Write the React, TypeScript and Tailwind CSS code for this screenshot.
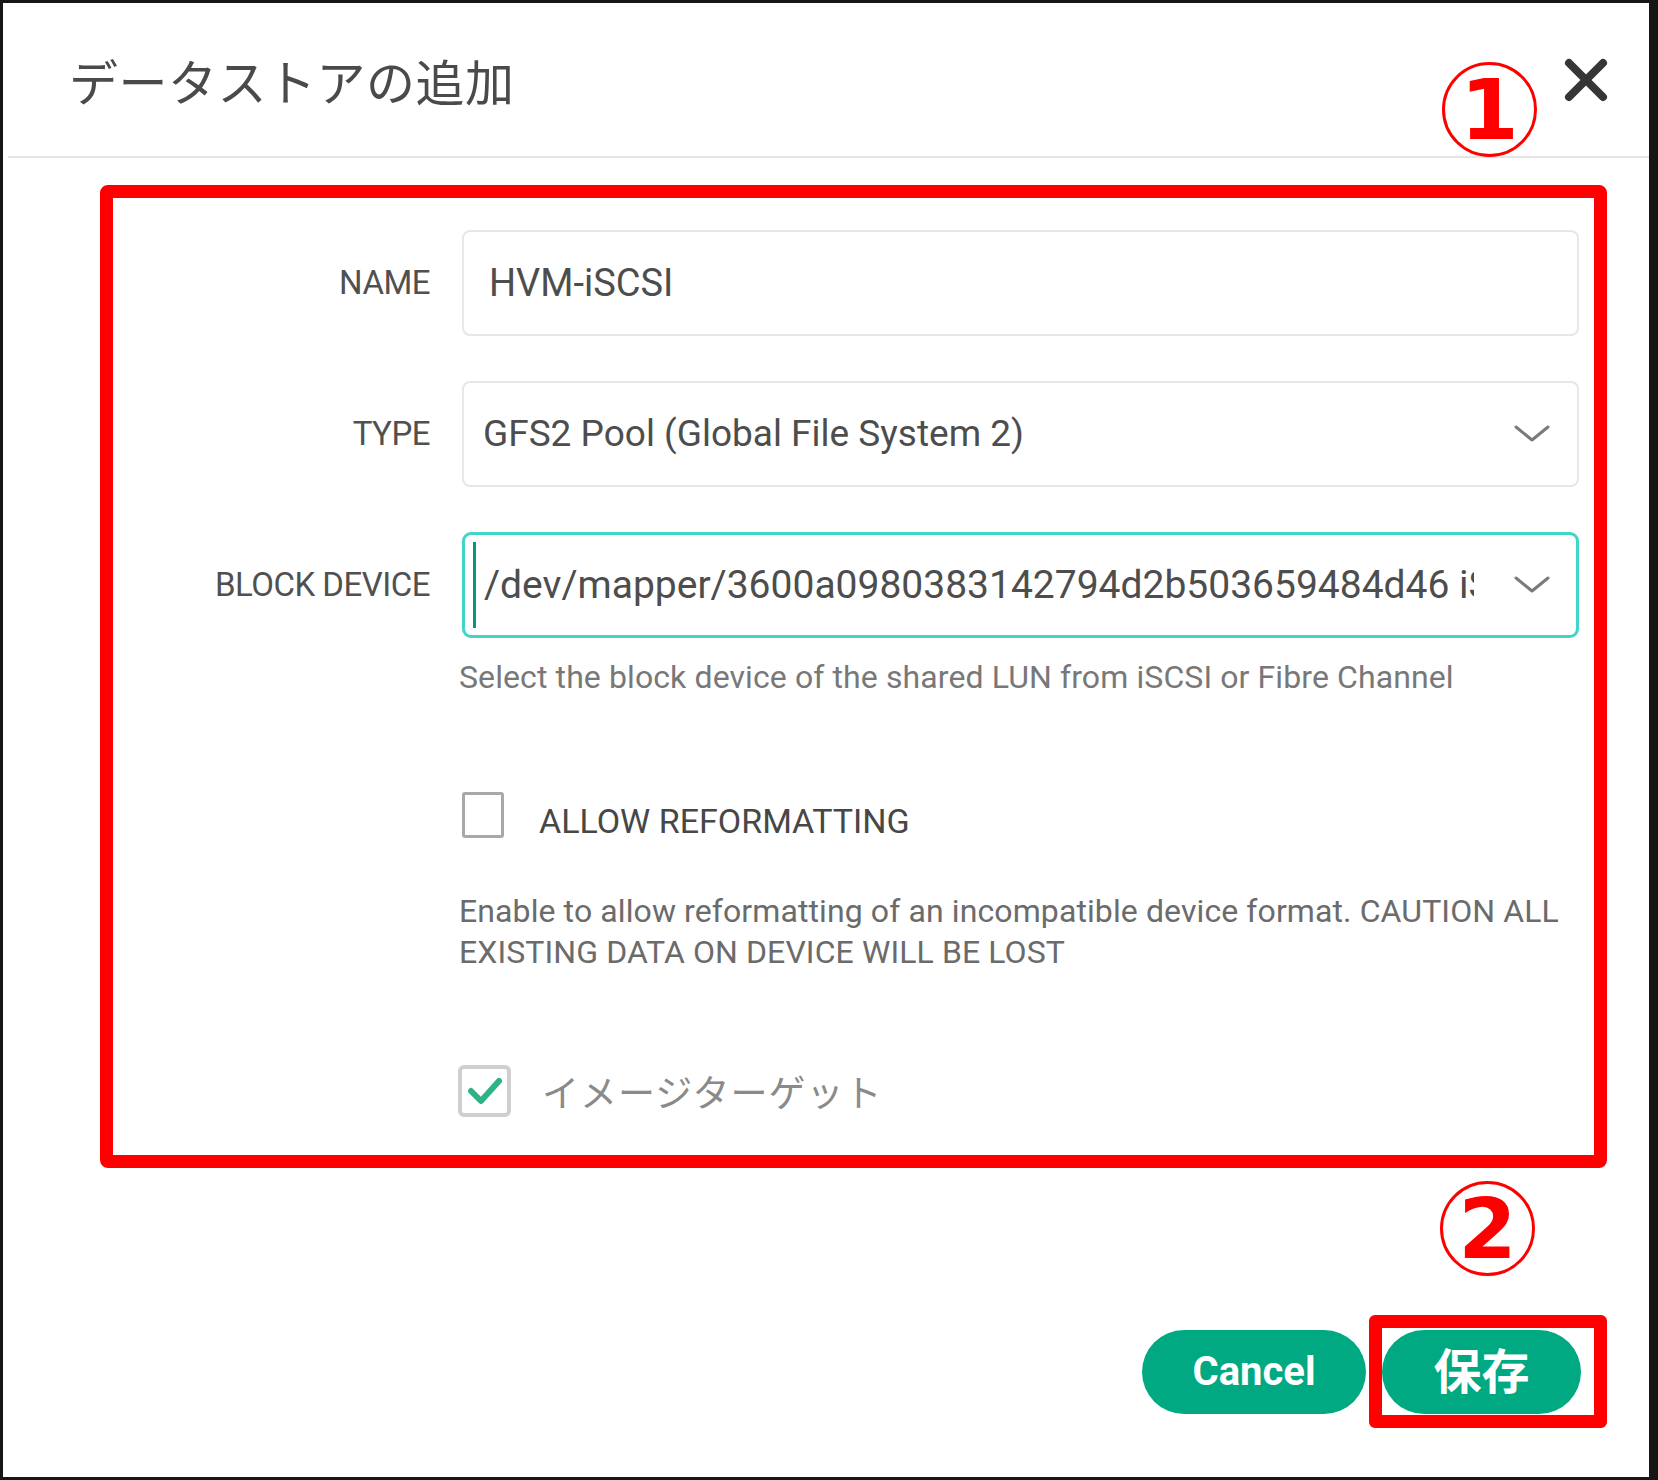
import React from "react";

const latin = "font-['Roboto','Noto_Sans_CJK_JP',sans-serif]";

function Chevron() {
  return (
    <svg width="36" height="18" viewBox="0 0 36 18" className="shrink-0">
      <polyline points="2,2 18,15 34,2" fill="none" stroke="#7a7a7a" strokeWidth="3" strokeLinecap="round" strokeLinejoin="round" />
    </svg>
  );
}

function Marker({ n }: { n: string }) {
  return (
    <div className="w-[95px] h-[95px] rounded-full border-[3px] border-[#ff0000] flex items-center justify-center">
      <span className="font-['DejaVu_Sans',sans-serif] font-bold text-[84px] leading-none text-[#ff0000]">{n}</span>
    </div>
  );
}

function Row({ label, children }: { label: string; children: React.ReactNode }) {
  return (
    <div className="flex items-center">
      <div className="w-[317px] text-right text-[33px] text-[#505050] tracking-[-0.5px]">{label}</div>
      <div className="ml-[32px] w-[1117px]">{children}</div>
    </div>
  );
}

export default function App() {
  return (
    <div className={`relative w-[1658px] h-[1480px] bg-white border-[3px] border-r-[9px] border-[#161616] flex flex-col ${latin}`}>
      {/* header */}
      <div className="h-[155px] shrink-0 flex items-center justify-between pl-[66px] pr-[41px] border-b-2 border-[#e4e4e4] ml-[5px]">
        <h1 className="font-['Noto_Sans_CJK_JP',sans-serif] text-[49px] font-normal text-[#4a4a4a] tracking-[0.5px] -ml-[5px]">データストアの追加</h1>
        <svg width="44" height="44" viewBox="0 0 44 44">
          <line x1="5" y1="5" x2="39" y2="39" stroke="#363636" strokeWidth="8" strokeLinecap="round" />
          <line x1="39" y1="5" x2="5" y2="39" stroke="#363636" strokeWidth="8" strokeLinecap="round" />
        </svg>
      </div>

      {/* form, outlined by annotation box 1 */}
      <div className="ml-[97px] mt-[27px] w-[1507px] h-[983px] border-[13px] border-[#ff0000] rounded-[8px] pt-[32px] flex flex-col">
        <Row label="NAME">
          <div className="h-[106px] border-2 border-[#e6e7ea] rounded-[8px] flex items-center pl-[25px] text-[38px] text-[#4d4d4d]">
            HVM-iSCSI
          </div>
        </Row>
        <div className="mt-[45px]">
          <Row label="TYPE">
            <div className="h-[106px] border-2 border-[#e6e7ea] rounded-[8px] flex items-center pl-[19px] pr-[27px] text-[37px] text-[#4d4d4d]">
              <span className="flex-1">GFS2 Pool (Global File System 2)</span>
              <Chevron />
            </div>
          </Row>
        </div>
        <div className="mt-[45px]">
          <Row label="BLOCK DEVICE">
            <div className="h-[106px] border-[3px] border-[#3fd6c9] rounded-[9px] flex items-center pl-[8px] pr-[26px] text-[39px] text-[#4d4d4d]">
              <span className="w-[3px] h-[86px] bg-[#0b9479] shrink-0" />
              <span className="ml-[8px] w-[990px] overflow-hidden whitespace-nowrap">/dev/mapper/3600a0980383142794d2b503659484d46 iSCSI</span>
              <span className="flex-1" />
              <Chevron />
            </div>
          </Row>
        </div>

        <p className="mt-[21px] pl-[346px] text-[32px] leading-[36px] text-[#787878] tracking-[0.1px] whitespace-nowrap">
          Select the block device of the shared LUN from iSCSI or Fibre Channel
        </p>

        <div className="mt-[97px] pl-[349px] flex items-start">
          <span className="w-[42px] h-[46px] border-[3px] border-[#a8a8a8] rounded-[3px] bg-white shrink-0" />
          <span className="ml-[35px] mt-[9px] text-[34px] leading-[40px] text-[#474747]">ALLOW REFORMATTING</span>
        </div>

        <p className="mt-[50px] pl-[346px] text-[32px] leading-[41px] text-[#6b6b6b] whitespace-nowrap tracking-[0.1px]">
          Enable to allow reformatting of an incompatible device format. CAUTION ALL
          <br />
          EXISTING DATA ON DEVICE WILL BE LOST
        </p>

        <div className="mt-[92px] pl-[345px] flex items-center">
          <span className="w-[53px] h-[52px] border-[4px] border-[#cfcfcf] rounded-[6px] bg-white flex items-center justify-center shrink-0">
            <svg width="36" height="30" viewBox="0 0 36 30">
              <polyline points="4,15 14,25 32,5" fill="none" stroke="#2fb386" strokeWidth="6" strokeLinecap="round" strokeLinejoin="round" />
            </svg>
          </span>
          <span className="ml-[31px] font-['Noto_Sans_CJK_JP',sans-serif] text-[37px] leading-[44px] text-[#8a8a8a] tracking-[1px]">イメージターゲット</span>
        </div>
      </div>

      {/* buttons */}
      <div className="mt-[147px] mr-[42px] flex justify-end items-center">
        <button className="w-[224px] h-[84px] rounded-full bg-[#01a982] text-white text-[40px] font-bold flex items-center justify-center">
          Cancel
        </button>
        <div className="ml-[3px] w-[238px] h-[113px] border-[13px] border-[#ff0000] rounded-[6px] flex items-center">
          <button className="w-[199px] h-[84px] rounded-full bg-[#01a982] text-white text-[48px] leading-none font-bold font-['Noto_Sans_CJK_JP',sans-serif] flex items-center justify-center pb-[8px]">
            保存
          </button>
        </div>
      </div>

      {/* numbered annotations */}
      <div className="absolute left-[1439px] top-[59px]">
        <Marker n="1" />
      </div>
      <div className="absolute left-[1437px] top-[1178px]">
        <Marker n="2" />
      </div>
    </div>
  );
}
